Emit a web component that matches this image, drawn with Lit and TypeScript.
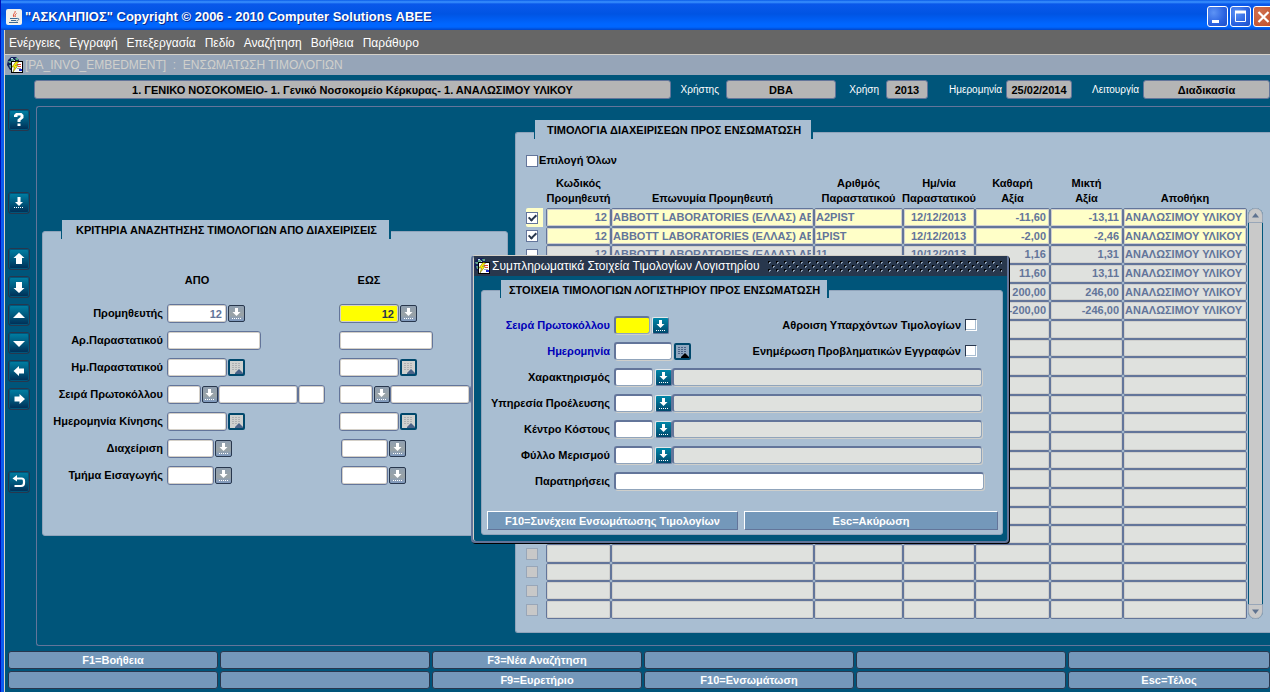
import { LitElement, html, css, svg, nothing } from "lit";
import { customElement } from "lit/decorators.js";
import { classMap } from "lit/directives/class-map.js";

type Row = { code: string; name: string; doc: string; date: string; net: string; gross: string; store: string };

const SUPPLIER = "ABBOTT LABORATORIES (ΕΛΛΑΣ) ΑΒΕΕ";
const STORE = "ΑΝΑΛΩΣΙΜΟΥ ΥΛΙΚΟΥ";

const ROWS: Row[] = [
  { code: "12", name: SUPPLIER, doc: "A2PIST", date: "12/12/2013", net: "-11,60", gross: "-13,11", store: STORE },
  { code: "12", name: SUPPLIER, doc: "1PIST", date: "12/12/2013", net: "-2,00", gross: "-2,46", store: STORE },
  { code: "12", name: SUPPLIER, doc: "11", date: "10/12/2013", net: "1,16", gross: "1,31", store: STORE },
  { code: "12", name: SUPPLIER, doc: "12", date: "10/12/2013", net: "11,60", gross: "13,11", store: STORE },
  { code: "12", name: SUPPLIER, doc: "13", date: "10/12/2013", net: "200,00", gross: "246,00", store: STORE },
  { code: "12", name: SUPPLIER, doc: "14", date: "10/12/2013", net: "-200,00", gross: "-246,00", store: STORE },
];
const ROW_COUNT = 22;
const CHECKED_ROWS = 2;

const MENU = ["Ενέργειες", "Εγγραφή", "Επεξεργασία", "Πεδίο", "Αναζήτηση", "Βοήθεια", "Παράθυρο"];

const FUNCTION_KEYS = [
  "F1=Βοήθεια", "", "F3=Νέα Αναζήτηση", "", "", "",
  "", "", "F9=Ευρετήριο", "F10=Ενσωμάτωση", "", "Esc=Τέλος",
];

const TOOLS = [
  { id: "help", label: "Βοήθεια", shape: svg`<path d="M5 7V5l2-2h5.500l2 2v3l-3 2.500V12H8.500V9.500l3-2.500V5.500h-3V7zM8.500 13.500h3V16h-3z"/>` },
  { id: "list", label: "Λίστα τιμών", shape: svg`<path d="M8.500 4h3v5H14l-4 4-4-4h2.500z"/><path d="M5 14.500h10" stroke="#fff" stroke-dasharray="1 1"/>` },
  { id: "up", label: "Προηγούμενη εγγραφή", shape: svg`<path d="M10 4l5.500 5H13v6H7V9H4.500z"/>` },
  { id: "down", label: "Επόμενη εγγραφή", shape: svg`<path d="M10 16l5.500-5H13V5H7v6H4.500z"/>` },
  { id: "pageup", label: "Προηγούμενη σελίδα", shape: svg`<path d="M4 13l6-6 6 6z"/>` },
  { id: "pagedown", label: "Επόμενη σελίδα", shape: svg`<path d="M4 8l6 6 6-6z"/>` },
  { id: "left", label: "Αριστερά", shape: svg`<path d="M4.500 10L10 5v2.500h5v5h-5V15z"/>` },
  { id: "right", label: "Δεξιά", shape: svg`<path d="M16 10l-5.500-5v2.500h-5v5h5V15z"/>` },
  { id: "exit", label: "Έξοδος", shape: svg`<path d="M6 6.500h6.500a2.500 2.500 0 0 1 2.500 2.500v2a3 3 0 0 1-3 3H5.500" fill="none" stroke="#fff" stroke-width="2.200"/><path d="M3.500 6.500l4.500-3.500v6.500z"/>` },
];

type Field = { kind: "text" | "lov" | "cal"; size: string; value?: string; active?: boolean };

const F = (kind: Field["kind"], size: string, value = "", active = false): Field => ({ kind, size, value, active });

const CRITERIA: { label: string; from: Field[]; to: Field[]; inset?: boolean }[] = [
  { label: "Προμηθευτής", from: [F("lov", "w60", "12")], to: [F("lov", "w60", "12", true)] },
  { label: "Αρ.Παραστατικού", from: [F("text", "w94")], to: [F("text", "w94")] },
  { label: "Ημ.Παραστατικού", from: [F("cal", "w60")], to: [F("cal", "w60")] },
  {
    label: "Σειρά Πρωτοκόλλου",
    from: [F("lov", "w34"), F("text", "w80"), F("text", "w27")],
    to: [F("lov", "w34"), F("text", "w80"), F("text", "w27")],
  },
  { label: "Ημερομηνία Κίνησης", from: [F("cal", "w60")], to: [F("cal", "w60")] },
  { label: "Διαχείριση", from: [F("lov", "w47")], to: [F("lov", "w47")], inset: true },
  { label: "Τμήμα Εισαγωγής", from: [F("lov", "w47")], to: [F("lov", "w47")], inset: true },
];

const formIcon = html`<svg class="form-icon" viewBox="0 0 16 16" aria-hidden="true">
  <path d="M1 3l3-3h5l3 3v4H5v6H3L0 8z" fill="#14205c"/>
  <path d="M1 4h3V2h3v2H5v2H2zM8 1h3v2H9zM2 8h2v3H3z" fill="#5fa58c"/>
  <path d="M4 1h2v1H4zM7 3h1v1H7z" fill="#b8d8e8"/>
  <rect x="4.500" y="4.500" width="11" height="11" fill="#fff" stroke="#000"/>
  <path d="M10 7.500h4M11 9.500h3" stroke="#e0452c"/><path d="M12 13h3" stroke="#1a2ad0" stroke-width="2"/><path d="M10 11.500h4" stroke="#9aa"/>
  <path d="M9 4.500L5 10h2.500L6 15l5-6.500H8.500L11.500 5z" fill="#fff200" stroke="#5c5600" stroke-width=".5"/>
</svg>`;

const lovGlyph = html`<svg viewBox="0 0 13 13" aria-hidden="true">
  <path d="M5 1h3v4h2.500l-4 4-4-4H5z" fill="#fff"/>
  <path d="M2 11.500h9" stroke="#fff" stroke-dasharray="1 1"/>
</svg>`;

const calGlyph = html`<svg viewBox="0 0 13 13" aria-hidden="true">
  <rect width="13" height="13" class="cal-page"/>
  <path d="M2 2.500h9M2 4.500h9M2 6.500h9M2 8.500h5" class="cal-lines" stroke-dasharray="2 1"/>
  <path d="M5 12l4-4 4 4v1H5z" class="cal-fold"/>
</svg>`;

@customElement("app-root")
export class AppRoot extends LitElement {
  static styles = css`
    :host {
      display: block;
      --teal: #00557a;
      --panel: #a9bed2;
      --slate: #63759a;
      --navy: #28374d;
      --key: #7498ba;
      font: bold 11px/15px "Liberation Sans", Arial, sans-serif;
      color: #000;
    }
    * { box-sizing: border-box; }
    button, input { font: inherit; color: inherit; margin: 0; padding: 0; }
    h1, h2, h3 { font: inherit; margin: 0; }
    svg { display: block; }

    .window {
      position: relative;
      min-height: 100vh;
      display: flex;
      flex-direction: column;
      overflow: hidden;
      background: var(--teal);
      border-left: 1px solid #0010b8;
      box-shadow: inset 3px 0 0 #0c5cf0, inset 4px 0 0 #d8d4c8;
      padding-left: 4px;
    }

    .caption {
      display: flex;
      align-items: center;
      gap: 3px;
      height: 30px;
      margin-left: -5px;
      padding: 3px 0 0 6px;
      color: #fff;
      font: bold 13px/18px "Liberation Sans", Arial, sans-serif;
      text-shadow: 1px 1px 0 #0a2a8c;
      background: linear-gradient(#0a5be8 0, #3c93ff 2px, #0a58ea 4px, #0054e3 14px, #0066ff 24px, #0066ff 27px, #0246c8 30px);
    }
    .caption h1 { flex: 1; }
    .java { width: 16px; height: 16px; }
    .caption-buttons { display: flex; gap: 2px; margin-right: -4px; }
    .cap {
      width: 21px; height: 21px;
      border: 1px solid #fff;
      border-radius: 3px;
      background: radial-gradient(circle at 30% 30%, #5d93f5, #2a62e0 60%, #1d4fc8);
    }
    .cap.close { background: radial-gradient(circle at 30% 30%, #d07050, #c04c28); }

    .menu {
      display: flex;
      gap: 9px;
      height: 24px;
      padding-left: 4px;
      background: #666;
      color: #fff;
      font: 12px/26px "Liberation Sans", Arial, sans-serif;
    }
    .menu a { color: inherit; text-decoration: none; }

    .form-title {
      display: flex;
      align-items: center;
      gap: 2px;
      height: 21px;
      padding-left: 2px;
      border-top: 1px solid #d4d0c8;
      background: #96a5b8;
      color: #d0d0cc;
      font: 12px/20px "Liberation Sans", Arial, sans-serif;
      white-space: pre;
    }
    .form-icon { flex: none; width: 16px; height: 16px; }

    .status {
      display: flex;
      align-items: center;
      padding: 5px 0 7px 29px;
      color: #fff;
    }
    .status label { font-weight: normal; font-size: 10px; text-align: right; white-space: nowrap; }
    .status input {
      height: 19px;
      min-width: 0;
      border: 1px solid var(--slate);
      border-radius: 3px;
      background: #b5b5b5;
      color: #000;
      text-align: center;
    }
    .org { flex: 1; }
    .l-user { width: 48px; margin-right: 7px; }
    .l-year { width: 43px; margin-right: 7px; }
    .l-date { width: 74px; margin-right: 4px; }
    .l-mode { width: 67px; margin-right: 4px; }
    .s-user { width: 110px; }
    .s-year { width: 42px; }
    .s-date { width: 66px; }
    .s-mode { width: 127px; }

    .middle { flex: 1; display: flex; padding-left: 3px; }
    .tools { display: flex; flex-direction: column; gap: 6px; width: 28px; padding-top: 3px; }
    .tool {
      width: 22px; height: 22px;
      border: 1px solid var(--navy);
      border-radius: 3px;
      background: linear-gradient(#0080a4, #00557a 55%, #002c54);
      box-shadow: inset 0 0 0 1px var(--teal);
    }
    .tool svg { width: 20px; height: 20px; fill: #fff; }
    .tool.list { margin-top: 55px; }
    .tool.up { margin-top: 28px; }
    .tool.exit { margin-top: 55px; }

    .desk {
      flex: 1;
      min-width: 0;
      display: flex;
      align-items: flex-start;
      gap: 7px;
      padding-left: 5px;
      border: 1px solid var(--slate);
      border-right: none;
      border-radius: 3px 0 0 3px;
    }
    .panel {
      background: var(--panel);
      border: 1px solid #90a4bb;
      border-radius: 3px;
    }
    .tab {
      width: max-content;
      height: 19px;
      background: var(--panel);
      line-height: 20px;
      white-space: nowrap;
      border: solid var(--teal);
      border-width: 0 2px 0 1px;
    }

    .criteria { width: 466px; margin-top: 124px; padding-bottom: 46px; }
    .criteria .tab { margin: -12px 0 0 18px; padding: 0 12px 0 14px; }
    .crit-grid {
      display: grid;
      grid-template-columns: 120px 168px 1fr;
      grid-template-rows: 31px;
      grid-auto-rows: 27px;
      column-gap: 4px;
      align-items: center;
      padding-top: 30px;
    }
    .crit-grid label { text-align: right; white-space: nowrap; }
    .col-head { width: 60px; text-align: center; padding-bottom: 8px; }
    .fields { display: flex; align-items: center; white-space: nowrap; }
    .fields.inset { padding-left: 2px; }

    .box {
      flex: none;
      height: 19px;
      border: 1px solid var(--slate);
      border-radius: 3px;
      background: #fff;
      box-shadow: inset 0 0 0 1px #d4d0c8;
      padding: 0 4px;
      color: var(--slate);
      text-align: right;
    }
    .box.active { background: #ff0; color: var(--navy); }
    .w27 { width: 27px; }
    .w34 { width: 34px; }
    .w47 { width: 47px; }
    .w60 { width: 60px; }
    .w80 { width: 80px; }
    .w94 { width: 94px; }
    .pick {
      flex: none;
      width: 17px; height: 17px;
      margin-left: 1px;
      padding: 1px;
      border: 1px solid var(--navy);
      border-radius: 2px;
      background: linear-gradient(#8f9fb0, #9aa3a6 60%, #7f9ac0);
    }
    .w34 + .pick { width: 16px; padding: 1px 0; }
    .pick svg { width: 13px; height: 13px; }
    .pick.cal { border-width: 2px; border-color: #00486c; padding: 0; }
    .cal-page { fill: #cfd1cf; }
    .cal-lines { stroke: #aeb1b3; fill: none; }
    .cal-fold { fill: #4a6388; }

    .invoices { flex: 1; min-width: 0; margin-top: 25px; padding: 0 0 13px 10px; border-right: none; border-radius: 3px 0 0 3px; }
    .invoices .tab { margin: -13px 0 0 8px; padding: 0 10px 0 12px; }
    .all { display: flex; align-items: center; gap: 1px; margin-top: 14px; width: max-content; }
    .tick {
      appearance: none;
      position: relative;
      flex: none;
      width: 12px; height: 12px;
      border: 1px solid var(--slate);
      background: #fff;
    }
    .tick:checked::after {
      content: "";
      position: absolute;
      left: 3px; top: 0;
      width: 3px; height: 6px;
      border: solid var(--navy);
      border-width: 0 2px 2px 0;
      transform: rotate(45deg);
    }
    .tick:disabled { background: #c8c8c8; border-color: #98a6b8; }

    .grid-wrap { display: flex; margin-top: 8px; }
    .grid { width: 721px; table-layout: fixed; border-spacing: 0; flex: none; }
    .grid th { height: 32px; padding: 0 0 2px; font: inherit; vertical-align: bottom; }
    .grid th span { display: block; margin: 0 -8px; text-align: center; white-space: nowrap; }
    .c-tick { width: 20px; }
    .c-code { width: 65px; }
    .c-name { width: 203px; }
    .c-doc { width: 89px; }
    .c-date { width: 72px; }
    .c-net { width: 75px; }
    .c-gross { width: 73px; }
    .c-store { width: 124px; }
    .grid td {
      height: 19px;
      padding: 0 2px 0 1px;
      overflow: hidden;
      white-space: nowrap;
      line-height: 15px;
      color: var(--slate);
      background: #dfe1de;
      border: 1px solid var(--slate);
      border-radius: 2px;
      box-shadow: inset 0 0 0 1px #cfcfcd;
    }
    .grid tr:nth-child(3n + 2) td { height: 18px; line-height: 14px; }
    .grid td.sel { background: none; border: none; padding: 0; box-shadow: none; }
    .grid .picked td { background: #ffffc8; }
    .grid .picked td.sel { background: none; }
    .grid .current td.sel { background: linear-gradient(to right, #ffffc8 17px, transparent 17px); }
    .sel .tick { display: block; }
    .clip { display: block; overflow: hidden; }
    .num { text-align: right; }
    .grid td.num { padding-right: 3px; }
    .mid { text-align: center; }
    .scroll {
      flex: none;
      width: 15px;
      margin-top: 32px;
      margin-left: 1px;
      display: flex;
      flex-direction: column;
      justify-content: space-between;
      background: #c9c9c9;
      border: solid var(--teal);
      border-width: 0 1px;
      border-radius: 8px;
    }
    .scroll button { height: 15px; margin: 0 -1px; background: #c9c9c9; border: 1px solid #98a6b8; }
    .scroll svg { width: 7px; height: 5px; margin: 0 auto; fill: #5f7390; }
    .s-up { border-radius: 7px 7px 0 0; }
    .s-down { border-radius: 0 0 7px 7px; }

    .keys {
      display: grid;
      grid-template-columns: repeat(5, 210fr) 202fr;
      grid-auto-rows: 18px;
      gap: 2px;
      padding: 5px 0 3px 3px;
    }
    .key {
      min-width: 0;
      border: 1px solid var(--navy);
      border-radius: 3px;
      background: var(--key);
      color: #fff;
      line-height: 16px;
    }

    .dialog {
      position: absolute;
      left: 470px;
      top: 255px;
      width: 538px;
      background: var(--teal);
      border: solid var(--slate);
      border-width: 1px 2px 2px 2px;
      border-top-color: #d4d0c8;
      border-radius: 4px;
      box-shadow: inset 1px 0 0 #d4d0c8, 1px 1px 0 #000;
      padding: 0 4px 6px 8px;
    }
    .dialog-title {
      display: flex;
      align-items: center;
      gap: 2px;
      height: 20px;
      margin: 0 -4px 0 -7px;
      background: var(--navy);
      color: #fff;
      font: 12px/20px "Liberation Sans", Arial, sans-serif;
      white-space: nowrap;
    }
    .grip { flex: 1; height: 11px; margin: 0 5px 0 6px; min-width: 0; }
    .dialog-panel { margin-top: 14px; padding: 0 4px 4px 5px; }
    .dialog .tab { margin: -11px 0 0 13px; padding: 0 7px 0 8px; height: 18px; line-height: 21px; }
    .dialog-form {
      display: grid;
      grid-template-columns: 123px 1fr;
      grid-auto-rows: 26px;
      column-gap: 4px;
      align-items: center;
      padding: 14px 14px 0 0;
    }
    .dialog-form > label { text-align: right; white-space: nowrap; }
    .req { color: #0000b8; }
    .line { display: flex; align-items: center; min-width: 0; }
    .line .push { margin-left: auto; margin-right: 4px; white-space: nowrap; }
    .line .push + .tick { margin-right: 7px; border-color: var(--navy) #fff #fff var(--navy); box-shadow: inset -1px -1px 0 #a9bed2; }
    .in {
      height: 18px;
      min-width: 0;
      border: solid #90a4bb;
      border-width: 2px 1px 1px 2px;
      border-top-color: var(--slate);
      border-left-color: var(--slate);
      border-radius: 3px;
      background: #fff;
      box-shadow: 1px 1px 0 #cfcfcb;
    }
    .in.hot { background: #ff0; }
    .in.ro { flex: 1; background: #dfe1de; margin-right: 2px; }
    .in.full { flex: 1; }
    .w36 { width: 36px; }
    .w58 { width: 58px; }
    .w39 { width: 39px; }
    .dialog .pick { margin: 0 0 0 2px; border-color: #e4e8ea var(--slate) var(--slate) #e4e8ea; background: linear-gradient(#0086a8, #00486c); }
    .dialog .pick.cal { border: 2px solid #00486c; }
    .dialog .cal-page { fill: #90a8c0; }
    .dialog .cal-lines { stroke: #4a6388; }
    .dialog .cal-fold { fill: #000; }
    .dialog-keys { display: grid; grid-template-columns: 251fr 254fr; gap: 6px; margin-top: 17px; }
    .dialog-keys button {
      height: 19px;
      border: 1px solid;
      border-color: #fff var(--slate) var(--slate) #fff;
      background: var(--key);
      color: #fff;
      line-height: 16px;
    }
  `;

  private pick(kind: string, target: string) {
    return kind === "text"
      ? nothing
      : html`<button class=${classMap({ pick: true, cal: kind === "cal" })} aria-label="Επιλογή ${target}">${kind === "cal" ? calGlyph : lovGlyph}</button>`;
  }

  private fields(list: Field[], label: string, id: string, side: string, inset = false) {
    return html`<div class=${classMap({ fields: true, inset })}>
      ${list.map(
        (f, i) => html`<input class="box ${f.size} ${f.active ? "active" : ""}" id="${id}-${i}" aria-label="${label} ${side}" .value=${f.value ?? ""}>${this.pick(f.kind, label)}`,
      )}
    </div>`;
  }

  private lookup(label: string, id: string) {
    return html`<label for=${id}>${label}</label>
      <div class="line">
        <input class="in w39" id=${id}>${this.pick("lov", label)}<input class="in ro" readonly aria-label="${label} περιγραφή">
      </div>`;
  }

  private row(i: number) {
    const r = ROWS[i];
    return html`<tr class=${classMap({ picked: i < CHECKED_ROWS, current: i === 0 })}>
      <td class="sel"><input type="checkbox" class="tick" aria-label="Επιλογή γραμμής ${i + 1}" ?checked=${i < CHECKED_ROWS} ?disabled=${!r}></td>
      <td class="num">${r?.code}</td>
      <td><span class="clip">${r?.name}</span></td>
      <td>${r?.doc}</td>
      <td class="mid">${r?.date}</td>
      <td class="num">${r?.net}</td>
      <td class="num">${r?.gross}</td>
      <td>${r?.store}</td>
    </tr>`;
  }

  render() {
    return html`
      <div class="window">
        <header class="caption">
          <svg class="java" viewBox="0 0 16 16" aria-hidden="true">
            <rect width="16" height="16" rx="2" fill="#f2f1ec"/>
            <path d="M9 2c1 2-3 3-1 6M10.500 4.500C8.500 6 9 7 9.500 8" stroke="#e0452c" fill="none"/>
            <path d="M4 9.500h7M5 11.500h5M3 13.500h9M11 9.500c3-.5 2 2-.5 2.500" stroke="#3c6a94" fill="none"/>
          </svg>
          <h1>"ΑΣΚΛΗΠΙΟΣ" Copyright © 2006 - 2010 Computer Solutions ΑΒΕΕ</h1>
          <div class="caption-buttons">
            <button class="cap" aria-label="Ελαχιστοποίηση"><svg viewBox="0 0 19 19"><path d="M4 14.500h7" stroke="#fff" stroke-width="3"/></svg></button>
            <button class="cap" aria-label="Μεγιστοποίηση"><svg viewBox="0 0 19 19"><path d="M4.500 5v9.500h10V5z" stroke="#fff" fill="none"/><path d="M4 5h11" stroke="#fff" stroke-width="3"/></svg></button>
            <button class="cap close" aria-label="Κλείσιμο"><svg viewBox="0 0 19 19"><path d="M4.500 5l10 10M14.500 5l-10 10" stroke="#fff" stroke-width="2.200"/></svg></button>
          </div>
        </header>

        <nav class="menu">${MENU.map((m) => html`<a href="#">${m}</a>`)}</nav>

        <div class="form-title">${formIcon}<h2>[PA_INVO_EMBEDMENT]  :  ΕΝΣΩΜΑΤΩΣΗ ΤΙΜΟΛΟΓΙΩΝ</h2></div>

        <div class="status">
          <input class="org" readonly aria-label="Φορέας" value="1. ΓΕΝΙΚΟ ΝΟΣΟΚΟΜΕΙΟ- 1. Γενικό Νοσοκομείο Κέρκυρας- 1. ΑΝΑΛΩΣΙΜΟΥ ΥΛΙΚΟΥ">
          <label class="l-user" for="user">Χρήστης</label><input class="s-user" id="user" readonly value="DBA">
          <label class="l-year" for="year">Χρήση</label><input class="s-year" id="year" readonly value="2013">
          <label class="l-date" for="date">Ημερομηνία</label><input class="s-date" id="date" readonly value="25/02/2014">
          <label class="l-mode" for="mode">Λειτουργία</label><input class="s-mode" id="mode" readonly value="Διαδικασία">
        </div>

        <div class="middle">
          <div class="tools">
            ${TOOLS.map((t) => html`<button class="tool ${t.id}" aria-label=${t.label}><svg viewBox="0 0 20 20">${t.shape}</svg></button>`)}
          </div>
          <main class="desk">
            <section class="panel criteria">
              <h3 class="tab">ΚΡΙΤΗΡΙΑ ΑΝΑΖΗΤΗΣΗΣ ΤΙΜΟΛΟΓΙΩΝ ΑΠΟ ΔΙΑΧΕΙΡΙΣΕΙΣ</h3>
              <div class="crit-grid">
                <span></span><span class="col-head">ΑΠΟ</span><span class="col-head">ΕΩΣ</span>
                ${CRITERIA.map(
                  (c, i) => html`<label for="from${i}-0">${c.label}</label>
                    ${this.fields(c.from, c.label, `from${i}`, "από")}
                    ${this.fields(c.to, c.label, `to${i}`, "έως", c.inset)}`,
                )}
              </div>
            </section>

            <section class="panel invoices">
              <h3 class="tab">ΤΙΜΟΛΟΓΙΑ ΔΙΑΧΕΙΡΙΣΕΩΝ ΠΡΟΣ ΕΝΣΩΜΑΤΩΣΗ</h3>
              <label class="all"><input type="checkbox" class="tick">Επιλογή Όλων</label>
              <div class="grid-wrap">
                <table class="grid">
                  <colgroup>
                    <col class="c-tick"><col class="c-code"><col class="c-name"><col class="c-doc"><col class="c-date"><col class="c-net"><col class="c-gross"><col class="c-store">
                  </colgroup>
                  <thead>
                    <tr>
                      <th></th>
                      <th><span>Κωδικός<br>Προμηθευτή</span></th>
                      <th><span>Επωνυμία Προμηθευτή</span></th>
                      <th><span>Αριθμός<br>Παραστατικού</span></th>
                      <th><span>Ημ/νία<br>Παραστατικού</span></th>
                      <th><span>Καθαρή<br>Αξία</span></th>
                      <th><span>Μικτή<br>Αξία</span></th>
                      <th><span>Αποθήκη</span></th>
                    </tr>
                  </thead>
                  <tbody>${Array.from({ length: ROW_COUNT }, (_, i) => this.row(i))}</tbody>
                </table>
                <div class="scroll">
                  <button class="s-up" aria-label="Κύλιση πάνω"><svg viewBox="0 0 7 5"><path d="M0 4.500L3.500 0 7 4.500z"/></svg></button>
                  <button class="s-down" aria-label="Κύλιση κάτω"><svg viewBox="0 0 7 5"><path d="M0 .5L3.500 5 7 .5z"/></svg></button>
                </div>
              </div>
            </section>
          </main>
        </div>

        <footer class="keys">${FUNCTION_KEYS.map((k) => html`<button class="key">${k}</button>`)}</footer>

        <div class="dialog" role="dialog" aria-labelledby="dlg-title">
          <div class="dialog-title">
            ${formIcon}<span id="dlg-title">Συμπληρωματικά Στοιχεία Τιμολογίων Λογιστηρίου</span>
            <svg class="grip" aria-hidden="true">
              <defs>
                <pattern id="dots" width="8" height="8" patternUnits="userSpaceOnUse">
                  <path d="M0 0h2v1H1v1H0zM4 4h2v1H5v1H4z" fill="#000"/>
                  <path d="M1 1h2v1H2v1H1zM5 5h2v1H6v1H5z" fill="#8fa0b4"/>
                </pattern>
              </defs>
              <rect width="100%" height="11" fill="url(#dots)"/>
            </svg>
          </div>
          <section class="panel dialog-panel">
            <h3 class="tab">ΣΤΟΙΧΕΙΑ ΤΙΜΟΛΟΓΙΩΝ ΛΟΓΙΣΤΗΡΙΟΥ ΠΡΟΣ ΕΝΣΩΜΑΤΩΣΗ</h3>
            <div class="dialog-form">
              <label class="req" for="serial">Σειρά Πρωτοκόλλου</label>
              <div class="line">
                <input class="in hot w36" id="serial">${this.pick("lov", "Σειρά Πρωτοκόλλου")}
                <label class="push" for="sum">Αθροιση Υπαρχόντων Τιμολογίων</label><input type="checkbox" class="tick" id="sum">
              </div>
              <label class="req" for="day">Ημερομηνία</label>
              <div class="line">
                <input class="in w58" id="day">${this.pick("cal", "Ημερομηνία")}
                <label class="push" for="upd">Ενημέρωση Προβληματικών Εγγραφών</label><input type="checkbox" class="tick" id="upd">
              </div>
              ${this.lookup("Χαρακτηρισμός", "kind")}
              ${this.lookup("Υπηρεσία Προέλευσης", "service")}
              ${this.lookup("Κέντρο Κόστους", "cost")}
              ${this.lookup("Φύλλο Μερισμού", "sheet")}
              <label for="notes">Παρατηρήσεις</label>
              <div class="line"><input class="in full" id="notes"></div>
            </div>
            <div class="dialog-keys">
              <button>F10=Συνέχεια Ενσωμάτωσης Τιμολογίων</button>
              <button>Esc=Ακύρωση</button>
            </div>
          </section>
        </div>
      </div>
    `;
  }
}
